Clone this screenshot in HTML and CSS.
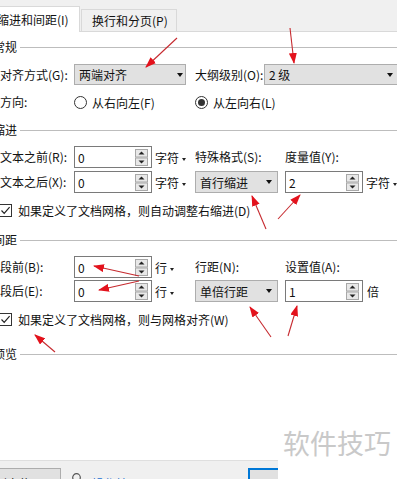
FILE: index.html
```html
<!DOCTYPE html>
<html>
<head>
<meta charset="utf-8">
<link rel="stylesheet" href="styles.css">
</head>
<body>
<div class="page">
  <div class="tabs">
    <div class="tab tab-active">缩进和间距(I)</div>
    <div class="tab">换行和分页(P)</div>
  </div>
  <div class="content">
    <div class="group-title"><span>常规</span></div>
    <div class="row row-align">
      <span class="lbl lbl-first">对齐方式(G):</span>
      <div class="select sel-align"><span>两端对齐</span><i class="caret"></i></div>
      <span class="lbl lbl-outline">大纲级别(O):</span>
      <div class="select sel-level"><span>2 级</span><i class="caret"></i></div>
    </div>
    <div class="row row-dir">
      <span class="lbl lbl-first">方向:</span>
      <span class="radio radio-first"><i class="radio-dot"></i>从右向左(F)</span>
      <span class="radio"><i class="radio-dot radio-on"></i>从左向右(L)</span>
    </div>

    <div class="group-title gt-indent"><span>缩进</span></div>
    <div class="grid grid-indent">
      <span class="lbl">文本之前(R):</span>
      <div class="spin"><span>0</span><svg class="spin-btns" width="13" height="17" viewBox="0 0 13 17"><rect x="0.5" y="0.5" width="12" height="7.5" fill="#e8e8e8" stroke="#a8a8a8"/><rect x="0.5" y="9" width="12" height="7.5" fill="#e8e8e8" stroke="#a8a8a8"/><path d="M3.5 5.5 L6.5 2.5 L9.5 5.5 Z" fill="#222"/><path d="M3.5 11.5 L6.5 14.5 L9.5 11.5 Z" fill="#222"/></svg></div>
      <span class="unit">字符<i class="caret-sm"></i></span>
      <span class="lbl">特殊格式(S):</span>
      <span class="lbl">度量值(Y):</span>
      <span></span>

      <span class="lbl">文本之后(X):</span>
      <div class="spin"><span>0</span><svg class="spin-btns" width="13" height="17" viewBox="0 0 13 17"><rect x="0.5" y="0.5" width="12" height="7.5" fill="#e8e8e8" stroke="#a8a8a8"/><rect x="0.5" y="9" width="12" height="7.5" fill="#e8e8e8" stroke="#a8a8a8"/><path d="M3.5 5.5 L6.5 2.5 L9.5 5.5 Z" fill="#222"/><path d="M3.5 11.5 L6.5 14.5 L9.5 11.5 Z" fill="#222"/></svg></div>
      <span class="unit">字符<i class="caret-sm"></i></span>
      <div class="select sel-mid"><span>首行缩进</span><i class="caret"></i></div>
      <div class="spin"><span>2</span><svg class="spin-btns" width="13" height="17" viewBox="0 0 13 17"><rect x="0.5" y="0.5" width="12" height="7.5" fill="#e8e8e8" stroke="#a8a8a8"/><rect x="0.5" y="9" width="12" height="7.5" fill="#e8e8e8" stroke="#a8a8a8"/><path d="M3.5 5.5 L6.5 2.5 L9.5 5.5 Z" fill="#222"/><path d="M3.5 11.5 L6.5 14.5 L9.5 11.5 Z" fill="#222"/></svg></div>
      <span class="unit">字符<i class="caret-sm"></i></span>
    </div>
    <div class="row check-row check-1">
      <i class="checkbox"><svg width="11" height="11" viewBox="0 0 11 11"><path d="M1.5 5.5 L4.2 8.3 L9.6 2.2" fill="none" stroke="#222" stroke-width="1.2"/></svg></i>
      <span>如果定义了文档网格，则自动调整右缩进(D)</span>
    </div>

    <div class="group-title gt-spacing"><span>间距</span></div>
    <div class="grid grid-spacing">
      <span class="lbl">段前(B):</span>
      <div class="spin"><span>0</span><svg class="spin-btns" width="13" height="17" viewBox="0 0 13 17"><rect x="0.5" y="0.5" width="12" height="7.5" fill="#e8e8e8" stroke="#a8a8a8"/><rect x="0.5" y="9" width="12" height="7.5" fill="#e8e8e8" stroke="#a8a8a8"/><path d="M3.5 5.5 L6.5 2.5 L9.5 5.5 Z" fill="#222"/><path d="M3.5 11.5 L6.5 14.5 L9.5 11.5 Z" fill="#222"/></svg></div>
      <span class="unit">行<i class="caret-sm"></i></span>
      <span class="lbl">行距(N):</span>
      <span class="lbl">设置值(A):</span>
      <span></span>

      <span class="lbl">段后(E):</span>
      <div class="spin"><span>0</span><svg class="spin-btns" width="13" height="17" viewBox="0 0 13 17"><rect x="0.5" y="0.5" width="12" height="7.5" fill="#e8e8e8" stroke="#a8a8a8"/><rect x="0.5" y="9" width="12" height="7.5" fill="#e8e8e8" stroke="#a8a8a8"/><path d="M3.5 5.5 L6.5 2.5 L9.5 5.5 Z" fill="#222"/><path d="M3.5 11.5 L6.5 14.5 L9.5 11.5 Z" fill="#222"/></svg></div>
      <span class="unit">行<i class="caret-sm"></i></span>
      <div class="select sel-mid"><span>单倍行距</span><i class="caret"></i></div>
      <div class="spin"><span>1</span><svg class="spin-btns" width="13" height="17" viewBox="0 0 13 17"><rect x="0.5" y="0.5" width="12" height="7.5" fill="#e8e8e8" stroke="#a8a8a8"/><rect x="0.5" y="9" width="12" height="7.5" fill="#e8e8e8" stroke="#a8a8a8"/><path d="M3.5 5.5 L6.5 2.5 L9.5 5.5 Z" fill="#222"/><path d="M3.5 11.5 L6.5 14.5 L9.5 11.5 Z" fill="#222"/></svg></div>
      <span class="unit unit-bei">倍</span>
    </div>
    <div class="row check-row check-2">
      <i class="checkbox"><svg width="11" height="11" viewBox="0 0 11 11"><path d="M1.5 5.5 L4.2 8.3 L9.6 2.2" fill="none" stroke="#222" stroke-width="1.2"/></svg></i>
      <span>如果定义了文档网格，则与网格对齐(W)</span>
    </div>

    <div class="group-title gt-preview"><span>预览</span></div>
  </div>
  <div class="footer">
    <div class="btn btn-tabs">制表位(T)...</div>
    <div class="tip"><svg width="9" height="9" viewBox="0 0 9 9"><circle cx="4.5" cy="4.5" r="3.8" fill="none" stroke="#555" stroke-width="1.2"/></svg><span>操作技巧</span></div>
    <div class="btn btn-ok">确定</div>
  </div>

  <svg class="arrows" width="397" height="479" viewBox="0 0 397 479">
    <defs>
      <marker id="ah" markerUnits="userSpaceOnUse" markerWidth="11" markerHeight="8" refX="10" refY="4" orient="auto">
        <path d="M0 0 L11 4 L0 8 Z" fill="#e3121c"/>
      </marker>
    </defs>
    <g stroke="#c62a2f" stroke-width="1.1" fill="none" marker-end="url(#ah)">
      <line x1="177" y1="38" x2="146" y2="67"/>
      <line x1="290" y1="28" x2="294" y2="63"/>
      <line x1="266" y1="229" x2="252" y2="196"/>
      <line x1="278" y1="219" x2="300" y2="195"/>
      <line x1="139" y1="276" x2="94" y2="266"/>
      <line x1="139" y1="281" x2="99" y2="290"/>
      <line x1="55" y1="352" x2="35" y2="335"/>
      <line x1="271" y1="337" x2="250" y2="307"/>
      <line x1="288" y1="336" x2="297" y2="306"/>
    </g>
  </svg>

  <div class="watermark">软件技巧</div>
</div>
</body>
</html>
```

FILE: styles.css
```css
* { box-sizing: border-box; }
html, body { margin: 0; padding: 0; }
body {
  width: 397px;
  height: 479px;
  overflow: hidden;
  background: #fff;
  font-family: "Noto Sans CJK SC", "Microsoft YaHei", sans-serif;
  font-size: 12px;
  color: #111;
}
.page {
  position: relative;
  width: 397px;
  height: 479px;
  display: flex;
  flex-direction: column;
  overflow: hidden;
}

/* tabs */
.tabs {
  flex: none;
  height: 32px;
  background: #f0f0f0;
  border-bottom: 1px solid #d9d9d9;
  display: flex;
  align-items: flex-end;
}
.tab {
  height: 22px;
  width: 96px;
  margin-left: 1px;
  padding-left: 10px;
  border: 1px solid #d9d9d9;
  border-bottom: none;
  background: #f0f0f0;
  line-height: 21px;
  white-space: nowrap;
}
.tab-active {
  width: 90px;
  height: 26px;
  margin-left: -10px;
  margin-bottom: -1px;
  padding-left: 6px;
  background: #fff;
  line-height: 25px;
}

/* content */
.content { flex: none; }
.group-title {
  display: flex;
  align-items: center;
  height: 18px;
  margin-left: -7px;
  margin-top: 6px;
  line-height: 18px;
}
.group-title span { padding-right: 3px; }
.group-title::after {
  content: "";
  flex: 1;
  height: 1px;
  background: #bdbdbd;
}
.gt-indent { margin-top: 9px; }
.gt-spacing { margin-top: 11px; }
.gt-preview { margin-top: 16px; }

.row {
  display: flex;
  align-items: center;
  white-space: nowrap;
}
.row-align { height: 21px; margin-top: 8px; }
.row-dir { height: 20px; margin-top: 7px; }
.lbl { white-space: nowrap; line-height: 16px; }
.lbl-first { width: 74px; flex: none; }
.lbl-outline { width: 69px; margin-left: 9px; flex: none; }

.select {
  display: flex;
  align-items: center;
  justify-content: space-between;
  height: 21px;
  background: #e1e1e1;
  border: 1px solid #adadad;
  padding-left: 4px;
  flex: none;
  white-space: nowrap;
}
.sel-align { width: 112px; padding-right: 2px; }
.sel-level { width: 136px; padding-right: 6px; }
.sel-mid { width: 83px; height: 22px; padding-right: 5px; }
.caret {
  width: 0;
  height: 0;
  border-left: 3.5px solid transparent;
  border-right: 3.5px solid transparent;
  border-top: 4px solid #111;
}
.caret-sm {
  display: inline-block;
  width: 0;
  height: 0;
  margin-left: 3px;
  vertical-align: middle;
  border-left: 2.5px solid transparent;
  border-right: 2.5px solid transparent;
  border-top: 3px solid #222;
}

.radio {
  display: flex;
  align-items: center;
  gap: 5px;
}
.radio-first { width: 121px; }
.radio-dot {
  width: 13px;
  height: 13px;
  border: 1px solid #333;
  border-radius: 50%;
  display: flex;
  align-items: center;
  justify-content: center;
  flex: none;
}
.radio-on::after {
  content: "";
  width: 7px;
  height: 7px;
  border-radius: 50%;
  background: #333;
}

.grid {
  display: grid;
  grid-template-columns: 74px 78px 43px 90px 78px 1fr;
  grid-auto-rows: 22px;
  align-items: center;
  white-space: nowrap;
}
.grid-indent { margin-top: 7px; row-gap: 3px; }
.grid-spacing { margin-top: 7px; row-gap: 2px; }

.spin {
  display: flex;
  align-items: center;
  justify-content: space-between;
  width: 78px;
  height: 22px;
  border: 1px solid #7a7a7a;
  background: #fff;
  padding: 0 3px 0 3px;
}
.spin-btns { display: block; }
.unit { margin-left: 3px; }
.unit-bei { margin-left: 4px; }

.check-row { height: 20px; margin-top: 7px; }
.checkbox {
  width: 13px;
  height: 13px;
  margin-left: -1px;
  margin-right: 6px;
  border: 1px solid #333;
  display: flex;
  align-items: center;
  justify-content: center;
  flex: none;
}
.checkbox svg { display: block; }

/* footer */
.footer {
  margin-top: auto;
  height: 19px;
  border-top: 1px solid #dfdfdf;
  background: #f0f0f0;
  padding-top: 7px;
  display: flex;
  align-items: flex-start;
  flex: none;
}
.btn {
  height: 24px;
  background: #e1e1e1;
  border: 1px solid #adadad;
  line-height: 22px;
  padding-top: 4px;
  text-align: center;
  white-space: nowrap;
}
.btn-tabs { width: 71px; margin-left: -10px; flex: none; }
.tip {
  width: 176px;
  margin-left: 11px;
  display: flex;
  align-items: flex-start;
  gap: 11px;
  color: #1a6fd1;
  padding-top: 5px;
  line-height: 16px;
  flex: none;
}
.tip svg { display: block; margin-top: 0; }
.tip span { margin-top: 3px; }
.btn-ok {
  width: 80px;
  border: 2px solid #0078d7;
  flex: none;
}

/* overlays */
.arrows {
  position: absolute;
  left: 0;
  top: 0;
  pointer-events: none;
}
.watermark {
  position: absolute;
  right: 0;
  bottom: 0;
  width: 119px;
  height: 56px;
  background: #fff;
  color: #c9c9c9;
  font-size: 27px;
  line-height: 30px;
  padding-left: 5px;
  padding-top: 5px;
  white-space: nowrap;
}
```
